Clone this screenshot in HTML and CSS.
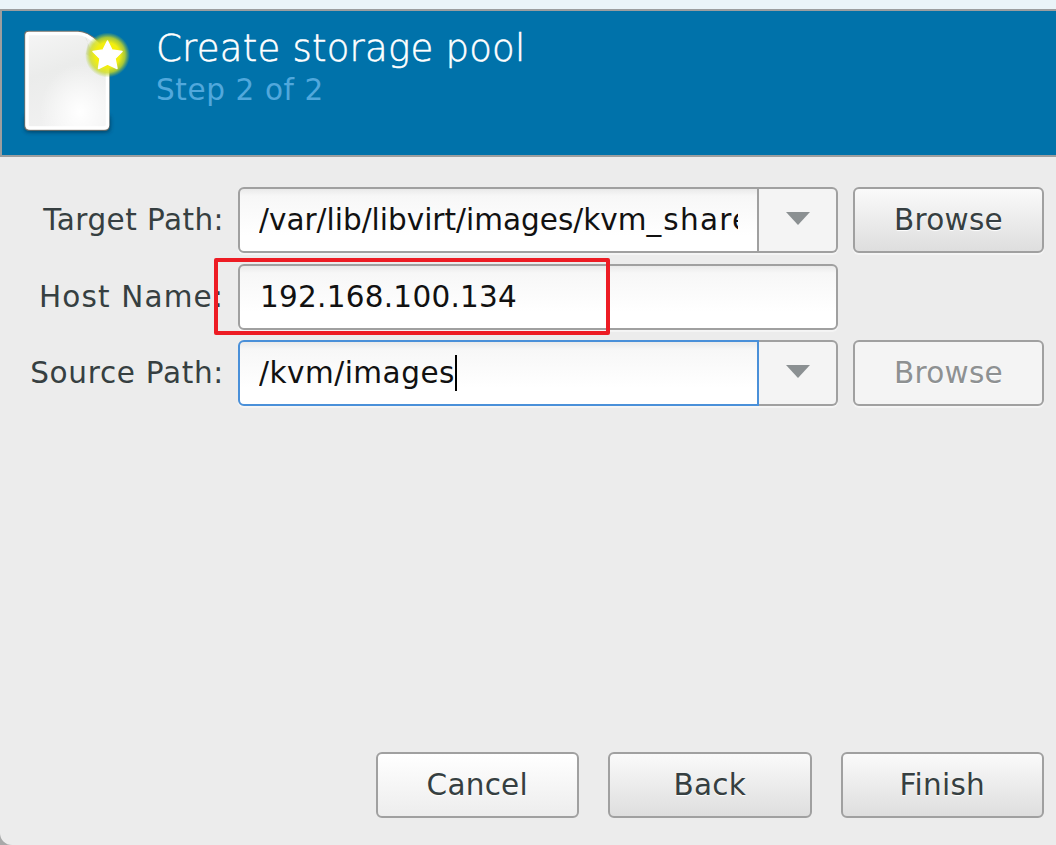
FILE: index.html
```html
<!DOCTYPE html>
<html lang="en">
<head>
<meta charset="utf-8">
<title>Create storage pool</title>
<link rel="stylesheet" href="styles.css">
</head>
<body>
<main class="dialog">
  <header class="banner">
    <svg class="page-icon" width="116" height="116" viewBox="0 0 116 116">
      <defs>
        <linearGradient id="paper" x1="0" y1="0" x2="0.3" y2="1">
          <stop offset="0" stop-color="#f6f6f6"/><stop offset="0.45" stop-color="#ebeceb"/><stop offset="1" stop-color="#f1f1f1"/>
        </linearGradient>
        <radialGradient id="sheen" cx="0.66" cy="0.83" r="0.5">
          <stop offset="0" stop-color="#fff"/><stop offset="1" stop-color="#fff" stop-opacity="0"/>
        </radialGradient>
        <radialGradient id="glow">
          <stop offset="0" stop-color="#fff200"/><stop offset="0.55" stop-color="#f2ee10"/><stop offset="0.78" stop-color="#cfdc20" stop-opacity="0.8"/><stop offset="1" stop-color="#a0c830" stop-opacity="0"/>
        </radialGradient>
        <filter id="soft" x="-20%" y="-30%" width="140%" height="160%"><feGaussianBlur stdDeviation="2"/></filter>
      </defs>
      <rect x="9" y="94" width="85" height="17" rx="4" fill="#00334f" opacity="0.8" filter="url(#soft)"/>
      <path d="M12 10.500H62C75 10.500 93 28 93 42V105Q93 109 89 109H13Q9 109 9 105V13.500Q9 10.500 12 10.500Z" fill="url(#paper)" stroke="#77736b" stroke-width="1.400"/>
      <path d="M13 12.500H62C73 12.500 91.500 29 91.500 42V104Q91.500 107 88 107H14Q11 107 11 104V14.500Q11 12.500 13 12.500Z" fill="url(#sheen)" stroke="#fff" stroke-width="3.500"/>
      <path d="M69 16C73 19 72 26 70 33L80 39Z" fill="#d9dbcf" opacity="0.8"/>
      <g transform="translate(-1.5 0.5)">
        <circle cx="93" cy="33.500" r="22.500" fill="url(#glow)"/>
        <path d="M93 19.500L97.500 28.500L107.500 30L100.500 37L102.500 47L93 42.500L84 47L85.500 37L78.500 30L88.500 28.500Z" fill="#fff" stroke="#fff" stroke-width="1.500" stroke-linejoin="round"/>
      </g>
    </svg>
    <div class="headings">
      <h1 class="title">Create storage pool</h1>
      <p class="step">Step 2 of 2</p>
    </div>
  </header>

  <section class="form">
    <div class="row">
      <label class="label target">Target Path:</label>
      <div class="combo">
        <div class="entry"><span class="value path">/var/lib/libvirt/images/kvm_<span class="spaced">share</span></span></div>
        <div class="drop"><svg width="24" height="13" viewBox="0 0 24 13"><path d="M0 0H24L12 13Z" fill="#8b9092"/></svg></div>
      </div>
      <button class="button browse">Browse</button>
    </div>
    <div class="row">
      <label class="label host">Host Name:</label>
      <div class="combo"><div class="entry whole"><span class="value address">192.168.100.134</span></div></div>
      <div class="highlight"></div>
    </div>
    <div class="row">
      <label class="label source">Source Path:</label>
      <div class="combo">
        <div class="entry focused"><span class="value images">/kvm/images</span><span class="caret"></span></div>
        <div class="drop"><svg width="24" height="13" viewBox="0 0 24 13"><path d="M0 0H24L12 13Z" fill="#8b9092"/></svg></div>
      </div>
      <button class="button browse" disabled>Browse</button>
    </div>
  </section>

  <footer class="actions">
    <button class="button action light">Cancel</button>
    <button class="button action">Back</button>
    <button class="button action">Finish</button>
  </footer>
</main>
</body>
</html>
```
FILE: styles.css
```css
* { box-sizing: border-box; }
body {
  margin: 0;
  height: 845px;
  overflow: hidden;
  background: #a8a9a9;
  font-family: "DejaVu Sans", sans-serif;
  font-size: 29.5px;
  color: #363f41;
}
.dialog {
  display: flex;
  flex-direction: column;
  height: 845px;
  border-top: 9px solid #eaf4f8;
  border-bottom-left-radius: 12px;
  background: #ececec;
}
.banner {
  display: flex;
  height: 148px;
  padding: 10px 0 0 14px;
  border: 2px solid #9c9e9f;
  border-right: 0;
  background: #0072aa;
}
.page-icon { flex: none; }
.headings { padding-left: 24px; }
.title {
  margin: 6px 0 0;
  font-size: 37px;
  font-weight: 200;
  line-height: 44px;
  letter-spacing: 0.25px;
  white-space: nowrap;
  color: #fff;
  -webkit-text-stroke: 0.5px #fff;
}
.step {
  margin: 0;
  font-size: 29.5px;
  line-height: 39px;
  letter-spacing: 0.6px;
  color: #51a8dc;
}
.form {
  display: flex;
  flex-direction: column;
  gap: 10.5px;
  padding: 30px 12px 0 0;
}
.row { position: relative; display: flex; height: 66px; }
.label {
  width: 224px;
  margin-right: 14px;
  text-align: right;
  line-height: 66px;
  white-space: nowrap;
}
.target { letter-spacing: 0.45px; }
.host { letter-spacing: 1.15px; }
.source { letter-spacing: 0.7px; }
.combo {
  display: flex;
  width: 600px;
  margin-right: 15px;
  border-radius: 6px;
  box-shadow: 0 2px 1px #f5f5f5;
}
.entry {
  display: flex;
  width: 521px;
  padding: 0 19px;
  overflow: hidden;
  border: 2px solid #a0a0a0;
  border-radius: 6px 0 0 6px;
  background: linear-gradient(#eaeaea, #f7f7f7 7px, #fff 75%);
  line-height: 62px;
  color: #111;
}
.entry.whole { width: 600px; border-radius: 6px; }
.entry.focused { border-color: #4a90d9; }
.value { overflow: hidden; white-space: nowrap; }
.spaced { padding-left: 2px; letter-spacing: 1.3px; }
.address { padding-left: 1px; letter-spacing: 0.25px; }
.images { letter-spacing: 0.5px; }
.caret { width: 2px; height: 36px; margin-top: 13px; background: #000; }
.drop {
  display: flex;
  flex: 1;
  align-items: center;
  justify-content: center;
  padding-bottom: 3px;
  border: 2px solid #a0a0a0;
  border-left: 0;
  border-radius: 0 6px 6px 0;
  background: #f4f4f4;
}
.highlight {
  position: absolute;
  top: -6px;
  left: 214px;
  width: 396px;
  height: 77px;
  border: 4px solid #ed1c24;
  border-radius: 2px;
}
.button {
  height: 66px;
  padding: 0 0 1px;
  border: 2px solid #a0a0a0;
  border-radius: 6px;
  background: linear-gradient(#fafafa, #dedede);
  box-shadow: 0 2px 1px #f5f5f5;
  font: inherit;
  letter-spacing: 0.25px;
  color: inherit;
  text-shadow: 0 1px 1px #fff;
}
.browse { width: 191px; }
.button:disabled { background: #f4f4f4; color: #8e9192; }
.actions {
  display: flex;
  justify-content: flex-end;
  gap: 29px;
  margin-top: auto;
  padding: 0 12px 27px 0;
}
.action { width: 203.5px; box-shadow: none; }
.light { background: linear-gradient(#fff, #ededed); }
```
